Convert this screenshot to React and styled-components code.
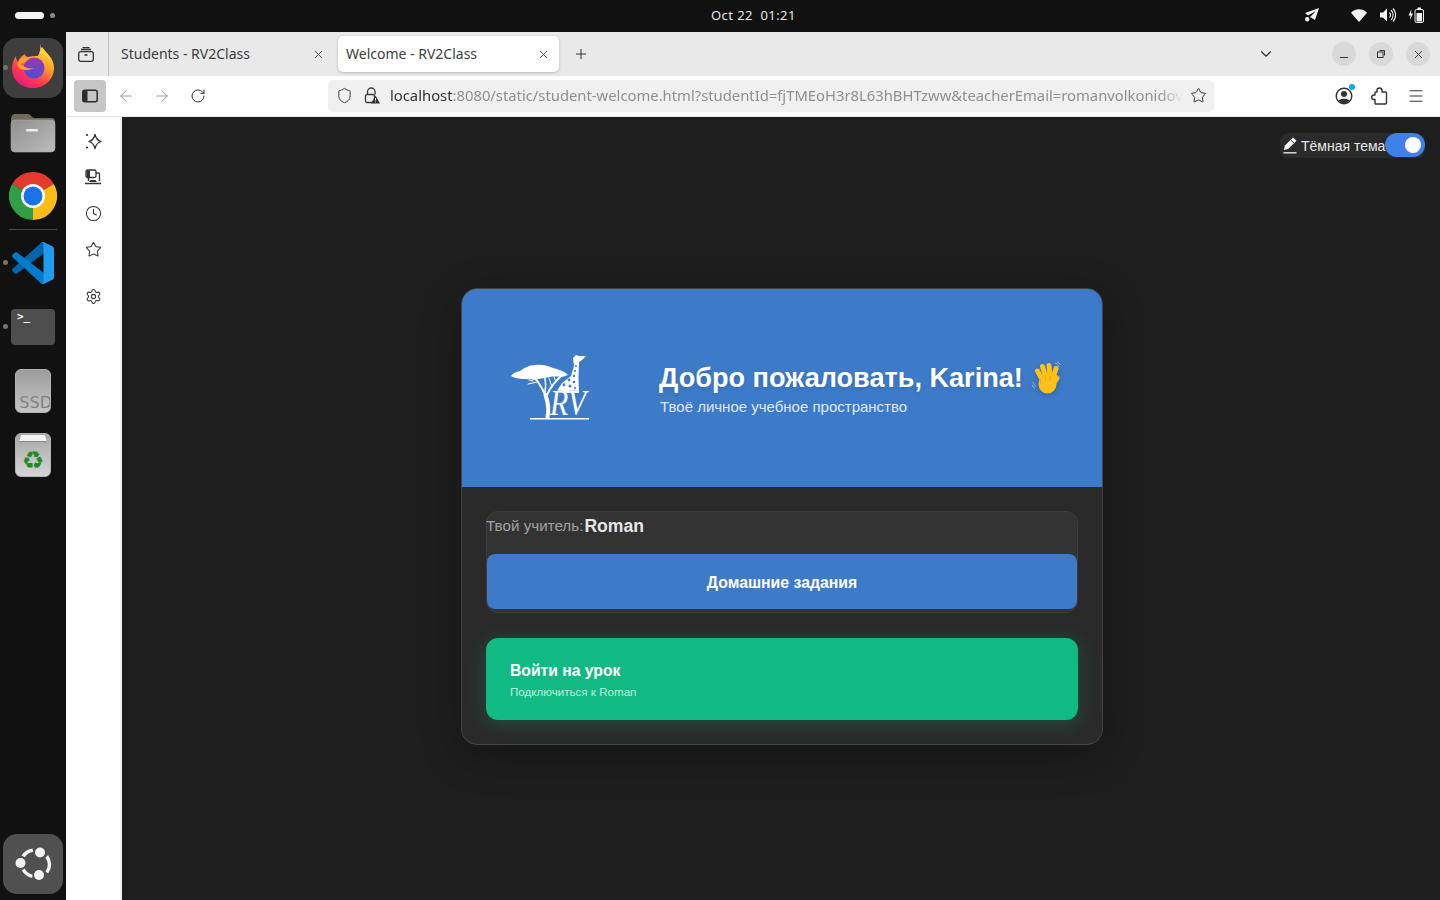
import React from 'react';
import styled, { createGlobalStyle } from 'styled-components';
import { Clock, Star, Settings, Shield, RotateCw, ArrowLeft, ArrowRight, Menu, Plus, X, ChevronDown } from 'lucide-react';

const Global = createGlobalStyle`
  html, body { margin: 0; padding: 0; height: 100%; background: #111; overflow: hidden; }
  * { box-sizing: border-box; }
`;
const Screen = styled.div`
  width: 1440px; height: 900px; display: grid;
  grid-template-rows: 32px 1fr; grid-template-columns: 66px 1fr;
  background: #111; overflow: hidden;
  font-family: "Noto Sans", sans-serif;
`;
const TopBar = styled.header`
  grid-column: 1 / 3; position: relative; display: flex; align-items: center;
  justify-content: space-between; padding: 0 16px 2px 15px; background: #111; color: #e6e6e6;
`;
const Workspaces = styled.div`display: flex; align-items: center; gap: 6px;`;
const ActivePill = styled.span`width: 29px; height: 7px; border-radius: 4px; background: #f2f2f2;`;
const IdleDot = styled.span`width: 5px; height: 5px; border-radius: 50%; background: #8a8a8a;`;
const Clock_ = styled.div`
  position: absolute; left: 711px; top: 7px; font-size: 13px; line-height: 16px; white-space: pre; letter-spacing: .42px;
`;
const Tray = styled.div`display: flex; align-items: center; height: 16px;`;
const TrayIcon = styled.svg`display: block; margin-left: ${p => p.$gap}px;`;

const Dock = styled.nav`
  display: flex; flex-direction: column; padding: 4px 0; background: #111;
`;
const DockItem = styled.div`
  position: relative; height: 64px; flex: none; display: flex; align-items: center; justify-content: center;
`;
const ActiveTile = styled.div`
  width: 60px; height: 60px; border-radius: 14px; background: ${p => p.$bg || '#3e3e3e'};
  display: flex; align-items: center; justify-content: center;
`;
const RunDot = styled.span`
  position: absolute; left: 3px; top: 29px; width: 5px; height: 5px; border-radius: 50%; background: #77745f;
`;
const DockSep = styled.div`height: 3px; padding: 1px 9px 1px; flex: none; &::after { content: ''; display: block; height: 1px; background: #4a4a4a; }`;
const Spacer = styled.div`flex: 1;`;
const Terminal = styled.div`
  width: 44px; height: 36px; border-radius: 4px; background: #4e4e4e; color: #f2f2f2; padding: 0 6px;
  font: 700 11px/15px "DejaVu Sans Mono", monospace;
`;
const Drive = styled.div`
  width: 36px; height: 44px; border-radius: 6px; position: relative; overflow: hidden;
  background: linear-gradient(#9d9d9d, #c4c4c4); border: 1px solid #b2b2b2;
`;
const DriveLabel = styled.span`
  position: absolute; right: -2px; bottom: -1px; font: 16px/20px "DejaVu Sans", sans-serif; color: #838383;
`;
const TrashBody = styled(Drive)`
  background: linear-gradient(#a8a8a8, #d4d4d4); display: flex; justify-content: center;
`;
const RecycleGlyph = styled.span`
  position: absolute; left: 0; right: 0; top: 14px; text-align: center;
  font: 25px/26px "DejaVu Sans", sans-serif; color: #1f8a1f;
`;
const TrashLid = styled.span`
  position: absolute; top: 1px; left: 3px; right: 3px; height: 7px; background: #f4f4f4;
  clip-path: polygon(8% 0, 92% 0, 100% 100%, 0 100%); border-bottom: 1px solid #888;
`;

const Browser = styled.main`display: flex; flex-direction: column; min-width: 0; background: #fff;`;
const TabStrip = styled.div`
  height: 44px; flex: none; display: flex; align-items: center; background: #e9e9e9; color: #333;
`;
const ViewBtn = styled.div`
  width: 43px; height: 44px; display: flex; align-items: center; justify-content: center; padding-right: 2px; border-right: 1px solid #c4c4c4;
`;
const Tab = styled.div`
  width: 221px; height: 36px; padding: 0 ${p => p.$active ? 9 : 5}px 0 ${p => p.$active ? 8 : 12}px; margin-left: ${p => p.$active ? 8 : 0}px;
  display: flex; align-items: center; justify-content: space-between; font-size: 14px; color: #3d3d3d;
  background: ${p => p.$active ? '#fff' : 'transparent'}; border-radius: 5px;
  box-shadow: ${p => p.$active ? '0 1px 3px rgba(0,0,0,.22)' : 'none'};
`;
const TabLabel = styled.span`position: relative; top: -1px;`;
const NewTab = styled.div`margin-left: 14px; display: flex;`;
const StripEnd = styled.div`margin-left: auto; display: flex; align-items: center; padding-right: 10px;`;
const WinBtn = styled.div`
  width: 24px; height: 24px; border-radius: 50%; background: #d9d9d9; margin-left: 13px;
  display: flex; align-items: center; justify-content: center;
`;
const ListBtn = styled.div`margin-right: 44px; display: flex;`;
const NavBar = styled.div`
  height: 41px; flex: none; display: flex; align-items: center; padding: 0 15px 1px 8px; background: #fff;
  border-bottom: 1px solid #e6e6e6; color: #333;
`;
const SideToggle = styled.div`
  width: 32px; height: 32px; margin-right: 2px; border-radius: 4px; background: #c6c6c6; display: flex; align-items: center; justify-content: center;
`;
const NavIcon = styled.div`width: 36px; display: flex; justify-content: center; color: ${p => p.$dim ? '#a3a3a3' : '#333'};`;
const UrlBar = styled.div`
  width: 886px; height: 32px; margin-left: 112px; border-radius: 5px; background: #f0f0f0;
  display: flex; align-items: center; padding: 0 7px 0 3px;
`;
const UrlIcon = styled.div`width: 27px; flex: none; display: flex; justify-content: center; color: #3d3d3d;`;
const UrlText = styled.div`
  flex: 1; min-width: 0; margin-left: 5px; overflow: hidden; white-space: nowrap; font-size: 14.8px; line-height: 20px; color: #8f8f8f;
  padding-bottom: 2px; margin-right: 7px;
  -webkit-mask-image: linear-gradient(90deg, #000 97%, transparent);
  mask-image: linear-gradient(90deg, #000 97%, transparent);
`;
const UrlHost = styled.span`color: #333;`;
const NavRight = styled.div`margin-left: auto; display: flex; align-items: center; gap: 18px; color: #333;`;
const ProfileWrap = styled.div`position: relative; display: flex;`;
const ProfileBadge = styled.span`
  position: absolute; right: -2px; top: -3px; width: 6px; height: 6px; border-radius: 50%; background: #12a5ee;
`;
const Body = styled.div`flex: 1; min-height: 0; display: flex;`;
const SideBar = styled.aside`
  width: 56px; flex: none; background: #fff; border-right: 2px solid #f0f0f0; padding-top: 6px;
  display: flex; flex-direction: column; align-items: center; color: #333;
`;
const SideIcon = styled.div`
  width: 56px; height: 36px; display: flex; align-items: center; justify-content: center; margin-top: ${p => p.$gap || 0}px;
`;
const Page = styled.section`
  flex: 1; position: relative; background: #1e1e1e; display: flex; align-items: flex-start; justify-content: center;
  padding: 171px 0 0 2px; font-family: "Liberation Sans", Arial, sans-serif;
`;
const ThemeToggle = styled.div`
  position: absolute; top: 16px; right: 15px; height: 25px; width: 145px; border-radius: 8px; background: #2a2a2a;
  display: flex; align-items: center; padding-left: 3px; color: #e8e8e8; font-size: 14px;
`;
const ThemeText = styled.span`margin-left: 3px; white-space: nowrap;`;
const Switch = styled.span`
  position: absolute; right: 0; top: 0; width: 40px; height: 24px; border-radius: 12px; background: #4080e8;
  &::after { content: ''; position: absolute; left: 20px; top: 4px; width: 16px; height: 16px; border-radius: 50%; background: #fff; }
`;
const Card = styled.article`
  width: 642px; height: 457px; flex: none; border: 1px solid #444; border-radius: 16px; background: #2a2a2a; overflow: hidden;
  box-shadow: 0 10px 40px rgba(0,0,0,.3);
`;
const Hero = styled.div`
  height: 198px; background: #3d7bc9; display: flex; align-items: center; padding-left: 43px; color: #fff;
`;
const Logo = styled.svg`display: block; flex: none; margin-right: 59px;`;
const HeroText = styled.div`display: flex; flex-direction: column;`;
const HeroTitleRow = styled.div`display: flex; align-items: center; height: 38px;`;
const HeroTitle = styled.h1`
  margin: 0; font-size: 27.1px; line-height: 38px; font-weight: 700; white-space: nowrap; text-shadow: 0 2px 4px rgba(0,0,0,.12);
`;
const Wave = styled.svg`display: block; flex: none; margin-left: 9px; filter: drop-shadow(0 2px 3px rgba(0,0,0,.2));`;
const HeroSub = styled.p`margin: 0 0 0 1px; font-size: 15px; line-height: 20px; color: rgba(255,255,255,.85);`;
const Content = styled.div`padding: 24px; display: flex; flex-direction: column; gap: 25px;`;
const TeacherBox = styled.div`
  height: 102px; border-radius: 12px; background: #333; border: 1px solid #3d3d3d; display: flex; flex-direction: column;
`;
const TeacherLine = styled.div`
  height: 42px; display: flex; align-items: flex-start; font-size: 15.2px; line-height: 27px; color: #a2a2a2; margin-left: -1px;
`;
const TeacherName = styled.strong`font-size: 17.6px; line-height: 29px; color: #e6e6e6; margin-left: 1px;`;
const HomeworkBtn = styled.div`
  height: 55px; border-radius: 8px; background: #3d7bc9; color: #fff; font-size: 15.8px; font-weight: 700;
  display: flex; align-items: center; justify-content: center; padding-top: 2px;
`;
const JoinBtn = styled.div`
  height: 82px; border-radius: 12px; background: #10ba82; color: #fff; padding: 23px 24px 0;
  box-shadow: 0 4px 20px rgba(16,186,130,.25);
`;
const JoinTitle = styled.div`font-size: 15.7px; line-height: 19px; font-weight: 700;`;
const JoinSub = styled.div`font-size: 11.6px; line-height: 14px; margin-top: 5px; color: rgba(255,255,255,.75);`;

const Firefox = () => (
  <svg width="48" height="48" viewBox="0 2 48 48">
    <defs>
      <linearGradient id="ffa" x1="0.8" y1="0" x2="0.2" y2="1"><stop offset="0" stopColor="#ffe84a"/><stop offset=".35" stopColor="#ffa52c"/><stop offset=".7" stopColor="#ff3750"/><stop offset="1" stopColor="#e3148c"/></linearGradient>
      <linearGradient id="ffb" x1="0.5" y1="0" x2="0.5" y2="1"><stop offset="0" stopColor="#9a35b8"/><stop offset="1" stopColor="#4d4fd0"/></linearGradient>
    </defs>
    <path d="M31 2c1 4 3 6 7 9 5 5 7 10 7 15 0 11-9 20-21 20C12 46 3 38 3 26c0-5 2-9 4-12 0 3 1 5 2 6 1-4 4-6 7-8 0 2 1 3 3 3 3-1 8-1 10-1 2-4 3-8 2-12z" fill="url(#ffa)"/>
    <path d="M33 5c3 4 6 7 8 12-3-3-6-5-10-6 1-2 2-4 2-6z" fill="#ffd93a"/>
    <circle cx="25" cy="26" r="10.500" fill="url(#ffb)"/>
    <path d="M9 20c3-5 8-6 13-4-2 1-4 2-5 4l-6 2 5 3c2 1 5 2 9 1-3 2-9 3-13 1-3-1-4-4-3-7z" fill="#ff9e2c"/>
  </svg>
);
const Folder = () => (
  <svg width="46" height="42" viewBox="0 0 46 42">
    <defs>
      <linearGradient id="fb" x1="0" y1="0" x2="1" y2="1"><stop offset="0" stopColor="#8f8f8f"/><stop offset="1" stopColor="#bcbcbc"/></linearGradient>
    </defs>
    <path d="M1 8c0-3 2-5 4-5h13c3 0 3 4 7 4h17c2 0 3 2 3 4v10H1z" fill="#6e6b56"/>
    <rect x="1" y="9" width="44" height="32" rx="4" fill="url(#fb)" stroke="#a9a9a9" strokeWidth=".6"/>
    <rect x="16" y="18" width="12" height="2.400" rx="1" fill="#eee"/>
  </svg>
);
const Chrome = () => (
  <svg width="48" height="48" viewBox="0 0 48 48">
    <path d="M24 24 L3.200 12 A24 24 0 0 1 44.800 12 Z" fill="#e33b2e"/>
    <path d="M24 24 L44.800 12 A24 24 0 0 1 24 48 Z" fill="#fbbc16"/>
    <path d="M24 24 L24 48 A24 24 0 0 1 3.200 12 Z" fill="#2f9e44"/>
    <circle cx="24" cy="24" r="12" fill="#fff"/>
    <circle cx="24" cy="24" r="9.500" fill="#1a73e8"/>
  </svg>
);
const VSCode = () => (
  <svg width="42" height="42" viewBox="0 0 100 100">
    <path d="M96.4614 10.7962L75.8569 0.875542C73.4719 -0.272773 70.6217 0.211611 68.75 2.08333L1.29858 63.5832C-0.515693 65.2373 -0.513607 68.0937 1.30308 69.7452L6.81272 74.754C8.29793 76.1042 10.5347 76.2036 12.1338 74.9905L93.3609 13.3699C96.086 11.3026 100 13.2462 100 16.6667V16.4275C100 14.0265 98.6246 11.8378 96.4614 10.7962Z" fill="#0065A9"/>
    <path d="M96.4614 89.2038L75.8569 99.1245C73.4719 100.273 70.6217 99.7884 68.75 97.9167L1.29858 36.4168C-0.515693 34.7627 -0.513607 31.9063 1.30308 30.2548L6.81272 25.246C8.29793 23.8958 10.5347 23.7964 12.1338 25.0095L93.3609 86.6301C96.086 88.6974 100 86.7538 100 83.3333V83.5725C100 85.9735 98.6246 88.1622 96.4614 89.2038Z" fill="#007ACC"/>
    <path d="M75.8578 99.1263C73.4721 100.274 70.6219 99.7885 68.75 97.9166C71.0564 100.223 75 98.5895 75 95.3278V4.67213C75 1.41039 71.0564 -0.223106 68.75 2.08329C70.6219 0.211402 73.4721 -0.273666 75.8578 0.873633L96.4587 10.7807C98.6234 11.8217 100 14.0112 100 16.4132V83.5871C100 85.9891 98.6234 88.1786 96.4587 89.2196L75.8578 99.1263Z" fill="#1F9CF0"/>
  </svg>
);
const UbuntuMark = () => (
  <svg width="40" height="40" viewBox="0 0 40 40" fill="#f2f2f2">
    <circle cx="7.500" cy="19" r="5"/><circle cx="27" cy="8.500" r="5"/><circle cx="26" cy="31" r="5"/>
    <path d="M8.500 11.500A15.500 15.500 0 0 1 19.500 4.500l.8 3.200a12 12 0 0 0-8.600 5.600z" />
    <path d="M35 11a15.500 15.500 0 0 1 .2 18.500l-2.800-2a12 12 0 0 0 0-13.800z"/>
    <path d="M8.800 26.500a15.500 15.500 0 0 0 10.400 7.500l.4-3.200a12 12 0 0 1-8-6.200z"/>
  </svg>
);
const Plane = () => (
  <TrayIcon $gap={0} width="16" height="14" viewBox="0 0 16 14" fill="#f2f2f2">
    <path d="M16 0 2 5l3 2.500L13 3 7 9l5 3z"/><circle cx="4.200" cy="11.300" r="2.200"/>
  </TrayIcon>
);
const Wifi = () => (
  <TrayIcon $gap={32} width="16" height="13" viewBox="0 0 16 13" fill="#f2f2f2">
    <path d="M0 3.800C4.500-.8 11.500-.8 16 3.800L8 13z"/>
  </TrayIcon>
);
const Volume = () => (
  <TrayIcon $gap={13} width="16" height="16" viewBox="0 0 16 16" fill="none">
    <path d="M0 5.500h3l4-4v13l-4-4H0z" fill="#f2f2f2"/>
    <path d="M9.500 5.500a3.500 3.500 0 0 1 0 5M11 3a7 7 0 0 1 0 10M13 1.500a9.500 9.500 0 0 1 0 13" stroke="#f2f2f2" strokeWidth="1.100"/>
  </TrayIcon>
);
const Battery = () => (
  <TrayIcon $gap={12} width="16" height="16" viewBox="0 0 16 16" fill="none">
    <path d="M3.500 2 .5 8.500h2L2 13l3-6.500H3z" fill="#f2f2f2"/>
    <rect x="7" y="2.500" width="8.500" height="13" rx="1.500" stroke="#f2f2f2" fill="none"/>
    <rect x="9.500" y="0.500" width="3.500" height="2" fill="#f2f2f2"/>
    <rect x="8.500" y="6" width="5.500" height="8.500" fill="#f2f2f2"/>
  </TrayIcon>
);
const ViewIcon = () => (
  <svg width="16" height="15" viewBox="0 0 16 15" fill="none" stroke="#333" strokeWidth="1.300">
    <rect x=".7" y="4.700" width="14.600" height="9.600" rx="2"/><path d="M3 2.500h10M4.500.7h7M6.500 8h3"/>
  </svg>
);
const SidebarIcon = () => (
  <svg width="16" height="14" viewBox="0 0 16 14" fill="none">
    <rect x=".8" y="1.300" width="14.400" height="11.400" rx="2" stroke="#2b2b2b" strokeWidth="1.500"/>
    <rect x="1" y="2" width="4.500" height="10" fill="#2b2b2b"/>
  </svg>
);
const LockWarn = () => (
  <svg width="16" height="17" viewBox="0 0 16 17" fill="none">
    <path d="M3.500 7.500V4.800a3.800 3.800 0 0 1 7.600 0v2.700" stroke="#3d3d3d" strokeWidth="1.300"/>
    <rect x="1.500" y="7.500" width="9" height="8" rx="1.500" stroke="#3d3d3d" strokeWidth="1.300"/>
    <path d="M11.500 8.500 16 16.500H7z" fill="#333"/>
    <path d="M11.500 11v2.500M11.500 14.500v.8" stroke="#f0f0f0"/>
  </svg>
);
const Sparkle = () => (
  <svg width="17" height="17" viewBox="0 0 17 17" fill="none" stroke="#333" strokeWidth="1.300">
    <path d="M10 1.500c.8 3.600 2 5.800 6 7-4 1.200-5.200 3.400-6 7-.8-3.600-2-5.800-6-7 4-1.200 5.200-3.400 6-7z" strokeLinejoin="round"/>
    <circle cx="2" cy="2" r="1.100" fill="#333" stroke="none"/><circle cx="2" cy="14.500" r="1.100" fill="#333" stroke="none"/>
  </svg>
);
const SyncIcon = () => (
  <svg width="16" height="16" viewBox="0 0 16 16" fill="none" stroke="#333" strokeWidth="1.300">
    <rect x="1" y="1" width="10" height="7.500" rx="1.500"/>
    <rect x="1.500" y="1.500" width="3.500" height="6.500" fill="#333" stroke="none"/>
    <path d="M11 4h2.500c.5 0 1 .4 1 1v7"/>
    <path d="M3.500 8.500V12M0 14.500h16" strokeWidth="1.500"/><path d="M4 13l1.500-2h5l1.500 2z" fill="#333" stroke="none"/>
  </svg>
);
const Profile = () => (
  <svg width="18" height="18" viewBox="0 0 18 18" fill="none">
    <circle cx="9" cy="9" r="7.800" stroke="#333" strokeWidth="1.400"/>
    <circle cx="9" cy="7" r="3" fill="#333"/>
    <path d="M3.500 13.500c2-2.500 9-2.500 11 0A7 7 0 0 1 3.500 13.500z" fill="#333"/>
  </svg>
);
const PuzzleIcon = () => (
  <svg width="18" height="18" viewBox="0 0 18 18" fill="none" stroke="#333" strokeWidth="1.400" strokeLinejoin="round">
    <path d="M8.500 1c1.700 0 2.500 1 2.500 2.200V5h3.500a1 1 0 0 1 1 1v10a1 1 0 0 1-1 1H5a1 1 0 0 1-1-1v-3.500H3c-1.300 0-2.300-1-2.300-2.300S1.700 8 3 8h1V6a1 1 0 0 1 1-1h1V3.200C6 2 6.800 1 8.500 1z"/>
  </svg>
);
const Pencil = () => (
  <svg width="15" height="17" viewBox="0 0 15 17">
    <path d="M10 .6l3.600 3.200-8.400 8.100-4.400 1.100 1.100-4.400z" fill="#f2f2f2"/>
    <path d="M8 3.300l3.300 3" stroke="#2a2a2a" strokeWidth=".9"/>
    <path d="M.5 15.800h13" stroke="#f2f2f2" strokeWidth="1.300"/>
  </svg>
);
const RvLogo = () => (
  <Logo width="95" height="80" viewBox="0 3 95 80" fill="#fff">
    <path d="M6 31c2-3 5-4 9-5 4-3 9-6 16-6 6-1 12 1 17 3 5 1 11 3 15 7l-6 2c-8-1-13 0-18 1-8 2-14 1-20 1-5 0-10-1-13-3z"/>
    <g stroke="#fff" fill="none" strokeLinecap="round">
      <path d="M42.500 72c1.500-7 .5-15-2-22" strokeWidth="4"/>
      <path d="M40 50c-2-6-5-10-9-16" strokeWidth="2"/>
      <path d="M31 35l-6-2M32 37l-9 2M28 36l-4-1" strokeWidth="1"/>
      <path d="M40 48c1-6 1-10 0-15" strokeWidth="1.500"/>
      <path d="M42 50c3-8 8-13 13-18" strokeWidth="2"/>
      <path d="M47 42l-3-9M51 37l-2-5" strokeWidth="1"/>
    </g>
    <path d="M68 13l3-3 3 1 7 0-4 4-3 2-.5 16 .5 15-3 0-9 0-10-2 5-8 9-7 3-10z"/>
    <g fill="#3d7bc9">
      <circle cx="71" cy="21" r="1"/><circle cx="70" cy="26" r="1.100"/><circle cx="69" cy="31" r="1.200"/><circle cx="64" cy="35" r="1.400"/><circle cx="69" cy="37" r="1.300"/><circle cx="59" cy="40" r="1.400"/><circle cx="65" cy="41" r="1.500"/><circle cx="70" cy="43" r="1.100"/>
    </g>
    <text x="45" y="70" fontFamily="'Liberation Serif', serif" fontStyle="italic" fontSize="35" textLength="36" lengthAdjust="spacingAndGlyphs" stroke="#3d7bc9" strokeWidth=".4" paintOrder="stroke">RV</text>
    <rect x="25" y="73" width="59" height="1.500"/>
  </Logo>
);
const WaveHand = () => (
  <Wave width="30" height="34" viewBox="0 0 30 34">
    <g stroke="#fcc21b" strokeWidth="5" strokeLinecap="round" fill="none">
      <path d="M11 20 5.500 10M14 17 10.500 5.500M18 16 17 4.500M21 17 24 7.500"/>
      <path d="M21 23l4-6"/>
    </g>
    <ellipse cx="15.500" cy="23" rx="9" ry="9.500" fill="#fcc21b"/>
    <path d="M8 18 9 23M13 15l1 5M18 15v5" stroke="#e59600" strokeWidth=".6" fill="none"/>
    <path d="M23 2c2 .6 3.500 2 4 4M25 .8c1.600.5 3 1.800 3.500 3.400M1 21c.4 2 1.500 3.500 3 4.500M.2 24c.6 1.500 1.300 2.500 2.500 3.500" stroke="#a9c4e6" fill="none" strokeWidth=".8"/>
  </Wave>
);

const tiny = { size: 13, strokeWidth: 1.6 };
const nav = { size: 18, strokeWidth: 1.4 };
const side = { size: 17, strokeWidth: 1.5 };

export default function App() {
  return (
    <Screen>
      <Global />
      <TopBar>
        <Workspaces><ActivePill /><IdleDot /></Workspaces>
        <Clock_>{'Oct 22  01:21'}</Clock_>
        <Tray><Plane /><Wifi /><Volume /><Battery /></Tray>
      </TopBar>
      <Dock>
        <DockItem><ActiveTile><Firefox /></ActiveTile><RunDot /></DockItem>
        <DockItem><Folder /></DockItem>
        <DockItem><Chrome /></DockItem>
        <DockSep />
        <DockItem><VSCode /><RunDot /></DockItem>
        <DockItem><Terminal>{'>_'}</Terminal><RunDot /></DockItem>
        <DockItem><Drive><DriveLabel>SSD</DriveLabel></Drive></DockItem>
        <DockItem><TrashBody><TrashLid /><RecycleGlyph>♻</RecycleGlyph></TrashBody></DockItem>
        <Spacer />
        <DockItem><ActiveTile $bg="#505050"><UbuntuMark /></ActiveTile></DockItem>
      </Dock>
      <Browser>
        <TabStrip>
          <ViewBtn><ViewIcon /></ViewBtn>
          <Tab><TabLabel>Students - RV2Class</TabLabel><X {...tiny} /></Tab>
          <Tab $active><TabLabel>Welcome - RV2Class</TabLabel><X {...tiny} /></Tab>
          <NewTab><Plus size={16} strokeWidth={1.5} /></NewTab>
          <StripEnd>
            <ListBtn><ChevronDown size={18} strokeWidth={1.5} /></ListBtn>
            <WinBtn><svg width="10" height="10" viewBox="0 0 10 10" stroke="#333"><path d="M1 8.500h8" /></svg></WinBtn>
            <WinBtn><svg width="10" height="10" viewBox="0 0 10 10" fill="none" stroke="#333"><rect x="1.500" y="3" width="5.500" height="5.500"/><path d="M3.500 1.500h5v5"/></svg></WinBtn>
            <WinBtn><X size={13} strokeWidth={1.7} /></WinBtn>
          </StripEnd>
        </TabStrip>
        <NavBar>
          <SideToggle><SidebarIcon /></SideToggle>
          <NavIcon $dim><ArrowLeft {...nav} /></NavIcon>
          <NavIcon $dim><ArrowRight {...nav} /></NavIcon>
          <NavIcon><RotateCw size={16} strokeWidth={1.5} /></NavIcon>
          <UrlBar>
            <UrlIcon><Shield size={17} strokeWidth={1.4} /></UrlIcon>
            <UrlIcon><LockWarn /></UrlIcon>
            <UrlText><UrlHost>localhost</UrlHost>:8080/static/student-welcome.html?studentId=fjTMEoH3r8L63hBHTzww&amp;teacherEmail=romanvolkonidov</UrlText>
            <Star size={17} strokeWidth={1.4} />
          </UrlBar>
          <NavRight>
            <ProfileWrap><Profile /><ProfileBadge /></ProfileWrap>
            <PuzzleIcon />
            <Menu size={18} strokeWidth={1.4} />
          </NavRight>
        </NavBar>
        <Body>
          <SideBar>
            <SideIcon><Sparkle /></SideIcon>
            <SideIcon><SyncIcon /></SideIcon>
            <SideIcon><Clock {...side} /></SideIcon>
            <SideIcon><Star {...side} /></SideIcon>
            <SideIcon $gap={11}><Settings {...side} /></SideIcon>
          </SideBar>
          <Page>
            <ThemeToggle>
              <Pencil />
              <ThemeText>Тёмная тема</ThemeText>
              <Switch />
            </ThemeToggle>
            <Card>
              <Hero>
                <RvLogo />
                <HeroText>
                  <HeroTitleRow><HeroTitle>Добро пожаловать, Karina!</HeroTitle><WaveHand /></HeroTitleRow>
                  <HeroSub>Твоё личное учебное пространство</HeroSub>
                </HeroText>
              </Hero>
              <Content>
                <TeacherBox>
                  <TeacherLine>Твой учитель:<TeacherName>Roman</TeacherName></TeacherLine>
                  <HomeworkBtn>Домашние задания</HomeworkBtn>
                </TeacherBox>
                <JoinBtn>
                  <JoinTitle>Войти на урок</JoinTitle>
                  <JoinSub>Подключиться к Roman</JoinSub>
                </JoinBtn>
              </Content>
            </Card>
          </Page>
        </Body>
      </Browser>
    </Screen>
  );
}
